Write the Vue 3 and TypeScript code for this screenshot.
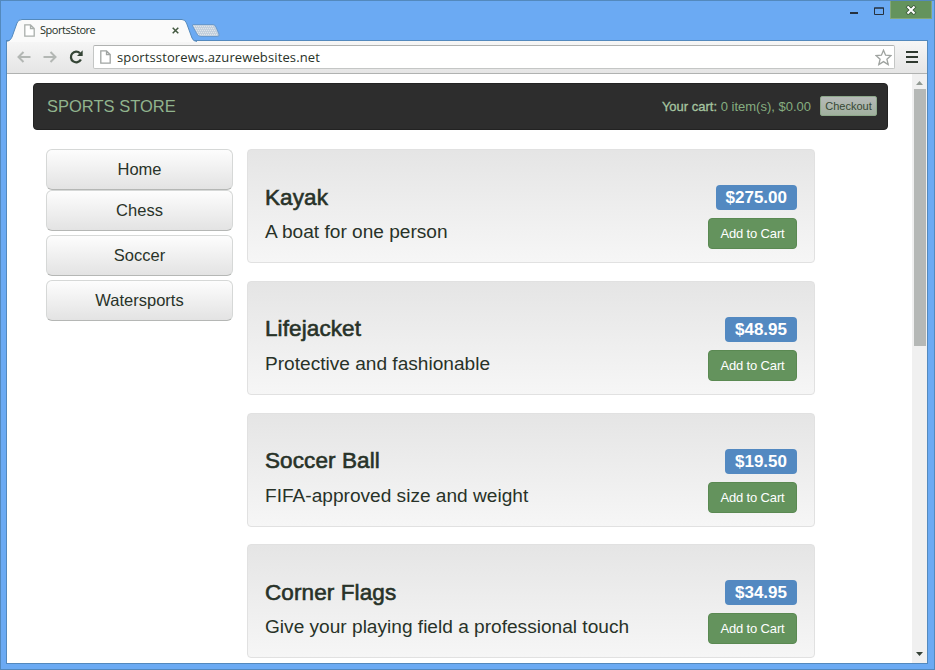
<script setup lang="ts">
interface Product {
  name: string
  description: string
  price: string
}

const categories: string[] = ['Home', 'Chess', 'Soccer', 'Watersports']

const products: Product[] = [
  { name: 'Kayak', description: 'A boat for one person', price: '$275.00' },
  { name: 'Lifejacket', description: 'Protective and fashionable', price: '$48.95' },
  { name: 'Soccer Ball', description: 'FIFA-approved size and weight', price: '$19.50' },
  { name: 'Corner Flags', description: 'Give your playing field a professional touch', price: '$34.95' },
]
</script>

<template>
  <div class="window">
    <header class="titlebar">
      <div class="tab">
        <svg class="tab-shape" width="216" height="23" viewBox="0 0 216 23">
          <path d="M1 23 C4 22 5 20 6 18 L11 4 Q12 .5 16 .5 H176 Q179 .5 180.500 4 L186 19 Q187 22 191 22.500 V23Z" fill="#fafafa" />
          <path d="M0 22.500 C4 22 5 20 6 18 L11 4 Q12 .5 16 .5 H176 Q179 .5 180.500 4 L186 19 Q187 22.300 191 22.500" fill="none" stroke="#5389bd" />
          <path d="M187 5.500 H207 Q209 5.500 210 8 L213 15 Q214 17.500 211 17.500 H195 Q192 17.500 191 15 L186.500 7 Q186 5.500 187 5.500Z" fill="#c3d0dd" stroke="#6699cf" />
          <path d="M188 7.500 H208 M189 9.500 H209 M190 11.500 H210 M191 13.500 H211 M192 15.500 H211" stroke="#e1e6ea" stroke-dasharray="1 1" />
        </svg>
        <svg class="page-icon" width="11" height="13" viewBox="0 0 11 13">
          <path d="M.8 .8 H6.500 L10.200 4.500 V12.200 H.8Z M6.500 .8 V4.500 H10.200" fill="#fff" stroke="#a9aeab" stroke-width="1.300" />
        </svg>
        <span class="tab-title">SportsStore</span>
        <svg class="tab-close" width="7" height="7" viewBox="0 0 7 7">
          <path d="M.7 .7 L6.300 6.300 M6.300 .7 L.7 6.300" stroke="#42583f" stroke-width="1.500" />
        </svg>
      </div>
      <div class="controls">
        <svg class="minimize" width="8" height="2"><rect width="8" height="2" fill="#26313d" /></svg>
        <svg class="maximize" width="10" height="8" viewBox="0 0 10 8">
          <path d="M.5 1 H9.500 V7.500 H.5Z M0 1 H10" fill="none" stroke="#26313d" />
        </svg>
        <div class="close">
          <svg width="12" height="10" viewBox="0 0 12 10">
            <path d="M2 1 L10 9 M10 1 L2 9" stroke="#365038" stroke-width="4" stroke-dasharray="1 .5" />
            <path d="M2.500 1.500 L9.500 8.500 M9.500 1.500 L2.500 8.500" stroke="#fff" stroke-width="2" />
          </svg>
        </div>
      </div>
    </header>

    <div class="frame">
      <div class="toolbar">
        <svg width="14" height="12" viewBox="0 0 14 12">
          <path d="M13.500 6 H1.500 M6.500 1 L1.500 6 L6.500 11" fill="none" stroke="#b3b7b4" stroke-width="2" />
        </svg>
        <svg class="forward" width="14" height="12" viewBox="0 0 14 12">
          <path d="M.5 6 H12.500 M7.500 1 L12.500 6 L7.500 11" fill="none" stroke="#b3b7b4" stroke-width="2" />
        </svg>
        <svg class="reload" width="15" height="14" viewBox="0 0 15 14">
          <path d="M11.900 9.500 A5.300 5.300 0 1 1 11 3.300" fill="none" stroke="#354536" stroke-width="2.300" />
          <path d="M13.700 .3 V6 H8Z" fill="#354536" />
        </svg>
        <div class="omnibox">
          <svg width="11" height="14" viewBox="0 0 11 14">
            <path d="M.8 .8 H6.500 L10.200 4.500 V13.200 H.8Z M6.500 .8 V4.500 H10.200" fill="#fff" stroke="#a0a4a2" stroke-width="1.300" />
          </svg>
          <span class="url">sportsstorews.azurewebsites.net</span>
          <svg class="star" width="17" height="17" viewBox="0 0 17 17">
            <path d="M8.500 1.200 L10.600 6.200 L16 6.600 L11.900 10.200 L13.200 15.600 L8.500 12.600 L3.800 15.600 L5.100 10.200 L1 6.600 L6.400 6.200Z" fill="#fff" stroke="#9fa3a0" stroke-width="1.300" />
          </svg>
        </div>
        <svg class="menu" width="12" height="12" viewBox="0 0 12 12">
          <path d="M0 1 H12 M0 6 H12 M0 11 H12" stroke="#2f392f" stroke-width="2" />
        </svg>
      </div>

      <div class="viewport">
        <main class="page">
          <div class="navbar">
            <span class="brand">SPORTS STORE</span>
            <div class="cart">
              <span class="summary"><b>Your cart:</b> 0 item(s), $0.00</span>
              <button class="checkout">Checkout</button>
            </div>
          </div>
          <div class="content">
            <nav class="categories">
              <button v-for="category in categories" :key="category" class="category">{{ category }}</button>
            </nav>
            <section class="products">
              <article v-for="product in products" :key="product.name" class="card">
                <div class="info">
                  <h3>{{ product.name }}</h3>
                  <p>{{ product.description }}</p>
                </div>
                <div class="actions">
                  <span class="price">{{ product.price }}</span>
                  <button class="add">Add to Cart</button>
                </div>
              </article>
            </section>
          </div>
        </main>
        <div class="scrollbar">
          <svg class="up" width="7" height="4" viewBox="0 0 7 4"><path d="M0 4 L3.500 0 L7 4Z" fill="#929a93" /></svg>
          <div class="thumb"></div>
          <svg class="down" width="7" height="4" viewBox="0 0 7 4"><path d="M0 0 L3.500 4 L7 0Z" fill="#354137" /></svg>
        </div>
      </div>
    </div>
  </div>
</template>

<style>
body {
  overflow: hidden;
}
</style>

<style scoped>
* {
  box-sizing: border-box;
}

button {
  display: block;
  margin: 0;
  padding: 0;
  font-family: inherit;
  white-space: nowrap;
}

svg {
  display: block;
  flex: none;
}

.window {
  display: flex;
  flex-direction: column;
  width: 935px;
  height: 670px;
  padding: 0 6px 5px 5px;
  border: 1px solid #5389bd;
  background: #6baaf3;
  font-family: "Liberation Sans", Arial, sans-serif;
  color: #283228;
}

.titlebar {
  display: flex;
  justify-content: space-between;
  flex: none;
  height: 39px;
}

.tab {
  position: relative;
  display: flex;
  align-items: center;
  width: 216px;
  height: 23px;
  margin-top: 18px;
  padding-left: 18px;
}

.tab-shape {
  position: absolute;
  left: 0;
  top: 0;
}

.page-icon,
.tab-title,
.tab-close {
  position: relative;
}

.tab-title {
  width: 136px;
  margin-left: 5px;
  padding-bottom: 1px;
  font: 11px/14px "Open Sans", sans-serif;
  letter-spacing: -0.450px;
  color: #253127;
}

.tab-close {
  margin-left: -4px;
}

.controls {
  display: flex;
  align-items: flex-start;
  margin-right: -4px;
}

.minimize {
  margin-top: 11px;
}

.maximize {
  margin: 6px 6px 0 16px;
}

.close {
  display: flex;
  align-items: center;
  justify-content: center;
  width: 42px;
  height: 18px;
  background: #64935d;
  border: 1px solid #83a77b;
  border-top: 0;
}

.frame {
  display: flex;
  flex-direction: column;
  flex: 1;
  min-height: 0;
  border: 1px solid #5389bd;
  background: #fff;
}

.toolbar {
  display: flex;
  align-items: center;
  flex: none;
  height: 33px;
  padding: 0 9px 0 10px;
  border-bottom: 1px solid #b0b2b1;
  background: linear-gradient(#f6f6f6, #e5e5e5);
}

.forward {
  margin-left: 12px;
}

.reload {
  margin-left: 12px;
}

.omnibox {
  display: flex;
  align-items: center;
  width: 803px;
  height: 24px;
  margin-left: 9px;
  padding: 0 2px 0 6px;
  border: 1px solid #c4c6c5;
  border-top-color: #b0b2b1;
  border-radius: 2px;
  background: #fff;
}

.url {
  margin-left: 6px;
  font: 13px/18px "Open Sans", sans-serif;
  letter-spacing: 0.120px;
}

.star {
  margin-left: auto;
}

.menu {
  margin-left: 11px;
}

.viewport {
  display: flex;
  flex: 1;
  min-height: 0;
}

.page {
  flex: 1;
  padding: 9px 24px 0 26px;
}

.navbar {
  display: flex;
  justify-content: space-between;
  width: 855px;
  height: 47px;
  margin-bottom: 1px;
  padding: 12px 10px 0 13px;
  border-radius: 4px;
  background: #2d2d2d;
  border: 1px solid #222;
}

.brand {
  margin-top: 1px;
  font-size: 16.500px;
  line-height: 18px;
  color: #91b48d;
}

.cart {
  display: flex;
  font-size: 13px;
}

.summary {
  margin-top: 3px;
  line-height: 16px;
  color: #86ad80;
}

.summary b {
  font-weight: 400;
  color: #a6c5a0;
  -webkit-text-stroke: 0.3px #a6c5a0;
}

.checkout {
  width: 57px;
  height: 20px;
  margin-left: 9px;
  border: 1px solid #8da88a;
  border-radius: 2px;
  background: linear-gradient(#b6bab8, #a1b09f);
  font-size: 11px;
  line-height: 17px;
  color: #364735;
}

.content {
  display: flex;
  gap: 14px;
  padding: 18px 0 0 13px;
}

.categories {
  display: flex;
  flex-direction: column;
  gap: 4px;
  width: 187px;
}

.category {
  height: 41px;
  padding-bottom: 1px;
  border: 1px solid #d6d8d7;
  border-bottom-color: #b5b7b5;
  border-radius: 6px;
  background: linear-gradient(#fdfdfd, #e3e3e3);
  font-size: 16.5px;
  color: #293329;
}

.category:first-child {
  margin-bottom: -4px;
}

.products {
  display: flex;
  flex-direction: column;
  gap: 17.800px;
  width: 568px;
}

.card {
  display: flex;
  justify-content: space-between;
  height: 114px;
  padding: 35px 17px 0;
  border: 1px solid #e1e1e1;
  border-radius: 4px;
  background: linear-gradient(#e5e5e5, #f6f6f6);
}

.info h3 {
  margin: -0.500px 0 0;
  font-size: 22.500px;
  line-height: 26px;
  font-weight: 400;
  letter-spacing: 0.100px;
  -webkit-text-stroke: 0.6px #283228;
}

.info p {
  margin: 9.500px 0 0;
  font-size: 19.100px;
  line-height: 24px;
}

.actions {
  display: flex;
  flex-direction: column;
  align-items: flex-end;
}

.price {
  height: 25px;
  padding: 0 10px;
  border-radius: 4px;
  background: #5389c1;
  font-size: 17px;
  line-height: 25px;
  font-weight: 700;
  color: #fff;
}

.add {
  width: 89px;
  height: 31px;
  margin-top: 8px;
  border: 1px solid #5a8952;
  border-radius: 4px;
  background: #64935d;
  font-size: 13px;
  letter-spacing: -0.150px;
  color: #fff;
}

.scrollbar {
  display: flex;
  flex-direction: column;
  align-items: center;
  width: 16px;
  padding: 7px 0 7px;
  background: #f0f0f0;
}

.thumb {
  width: 12px;
  height: 257px;
  margin-top: 4px;
  background: #b5b8b6;
}

.down {
  margin-top: auto;
}
</style>
